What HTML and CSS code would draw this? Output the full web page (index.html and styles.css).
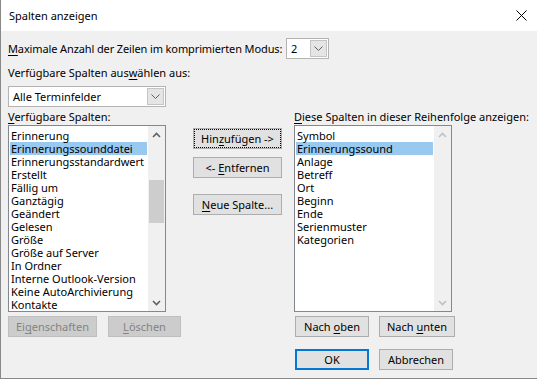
FILE: index.html
```html
<!DOCTYPE html>
<html lang="de">
<head>
    <meta charset="UTF-8">
    <title>Spalten anzeigen</title>
    <link rel="stylesheet" href="styles.css">
</head>
<body>
    <div class="dialog">
        <div class="titlebar">
            <span class="title">Spalten anzeigen</span>
            <svg class="close" width="11" height="11" viewBox="0 0 11 11"><path d="M0.5 0.5L10.5 10.5M10.5 0.5L0.5 10.5" stroke="#000" stroke-width="1"/></svg>
        </div>

        <div class="content">
            <div class="maxrow">
                <label class="maxlabel"><u>M</u>aximale Anzahl der Zeilen im komprimierten Modus:</label>
                <div class="combo combo-small">
                    <span class="combo-text">2</span>
                    <span class="combo-btn"><svg width="9" height="5" viewBox="0 0 9 5"><path d="M0.5 0.5L4.5 4.5L8.5 0.5" fill="none" stroke="#606060"/></svg></span>
                </div>
            </div>

            <div class="label">Verfügbare Spalten aus<u>w</u>ählen aus:</div>
            <div class="combo combo-wide">
                <span class="combo-text">Alle Terminfelder</span>
                <span class="combo-btn"><svg width="9" height="5" viewBox="0 0 9 5"><path d="M0.5 0.5L4.5 4.5L8.5 0.5" fill="none" stroke="#606060"/></svg></span>
            </div>

            <div class="columns">
                <!-- left: available columns -->
                <div class="col">
                    <div class="label"><u>V</u>erfügbare Spalten:</div>
                    <div class="listbox">
                        <ul class="items">
                            <li>Erinnerung</li>
                            <li class="selected">Erinnerungssounddatei</li>
                            <li>Erinnerungsstandardwert</li>
                            <li>Erstellt</li>
                            <li>Fällig um</li>
                            <li>Ganztägig</li>
                            <li>Geändert</li>
                            <li>Gelesen</li>
                            <li>Größe</li>
                            <li>Größe auf Server</li>
                            <li>In Ordner</li>
                            <li>Interne Outlook-Version</li>
                            <li>Keine AutoArchivierung</li>
                            <li>Kontakte</li>
                        </ul>
                        <div class="scrollbar">
                            <div class="sb-btn"><svg width="9" height="6" viewBox="0 0 9 6"><path d="M1 5L4.5 1.5L8 5" fill="none" stroke="#606060" stroke-width="1.6"/></svg></div>
                            <div class="sb-track"><div class="sb-thumb"></div></div>
                            <div class="sb-btn"><svg width="9" height="6" viewBox="0 0 9 6"><path d="M1 1L4.5 4.5L8 1" fill="none" stroke="#606060" stroke-width="1.6"/></svg></div>
                        </div>
                    </div>
                    <div class="btnrow">
                        <button class="btn btn-props" disabled>Ei<u>g</u>enschaften</button>
                        <button class="btn btn-del" disabled><u>L</u>öschen</button>
                    </div>
                </div>

                <!-- middle: move buttons -->
                <div class="mid">
                    <button class="btn btn-mid btn-focus">Hin<u>z</u>ufügen -&gt;</button>
                    <button class="btn btn-mid btn-remove">&lt;- <u>E</u>ntfernen</button>
                    <button class="btn btn-mid btn-new"><u>N</u>eue Spalte...</button>
                </div>

                <!-- right: shown columns -->
                <div class="col col-right">
                    <div class="label"><u>D</u>iese Spalten in dieser Reihenfolge anzeigen:</div>
                    <div class="listbox">
                        <ul class="items">
                            <li>Symbol</li>
                            <li class="selected">Erinnerungssound</li>
                            <li>Anlage</li>
                            <li>Betreff</li>
                            <li>Ort</li>
                            <li>Beginn</li>
                            <li>Ende</li>
                            <li>Serienmuster</li>
                            <li>Kategorien</li>
                        </ul>
                        <div class="scrollbar disabled">
                            <div class="sb-btn"><svg width="9" height="6" viewBox="0 0 9 6"><path d="M1 5L4.5 1.5L8 5" fill="none" stroke="#c0c0c0" stroke-width="1.6"/></svg></div>
                            <div class="sb-track"></div>
                            <div class="sb-btn"><svg width="9" height="6" viewBox="0 0 9 6"><path d="M1 1L4.5 4.5L8 1" fill="none" stroke="#c0c0c0" stroke-width="1.6"/></svg></div>
                        </div>
                    </div>
                    <div class="btnrow">
                        <button class="btn btn-up">Nach <u>o</u>ben</button>
                        <button class="btn btn-down">Nach <u>u</u>nten</button>
                    </div>
                    <div class="btnrow okrow">
                        <button class="btn btn-ok">OK</button>
                        <button class="btn btn-cancel">Abbrechen</button>
                    </div>
                </div>
            </div>
        </div>
    </div>
</body>
</html>
```

FILE: styles.css
```css
* {
    box-sizing: border-box;
}

html, body {
    margin: 0;
    padding: 0;
}

body {
    width: 537px;
    height: 379px;
    overflow: hidden;
    background: #f0f0f0;
    font-family: "Noto Sans", sans-serif;
    font-size: 11px;
    color: #000;
}

u {
    text-decoration-thickness: 1px;
    text-underline-offset: 2px;
}

.dialog {
    width: 537px;
    height: 379px;
    border-left: 1px solid #888;
    border-bottom: 1px solid #888;
    display: flex;
    flex-direction: column;
}

/* title bar */
.titlebar {
    height: 31px;
    background: #fff;
    display: flex;
    align-items: center;
    justify-content: space-between;
    padding: 0 10px 0 8px;
    flex: none;
}

.title {
    font-size: 11px;
}

.close {
    display: block;
}

.content {
    padding: 0 0 0 7px;
    display: flex;
    flex-direction: column;
}

.label {
    line-height: 14px;
    height: 14px;
    white-space: nowrap;
}

/* first row */
.maxrow {
    display: flex;
    align-items: center;
    height: 21px;
    margin-top: 7px;
}

.maxlabel {
    width: 278px;
    flex: none;
    white-space: nowrap;
    letter-spacing: -0.12px;
}

.content > .label {
    margin-top: 7px;
}

/* combo boxes */
.combo {
    height: 21px;
    background: #fff;
    border: 1px solid #b4b4b4;
    display: flex;
    align-items: center;
    padding: 1px;
    flex: none;
}

.combo-text {
    flex: 1;
    padding-left: 3px;
    white-space: nowrap;
}

.combo-btn {
    width: 17px;
    height: 17px;
    background: #e5e5e5;
    border: 1px solid #c4c4c4;
    display: flex;
    align-items: center;
    justify-content: center;
}

.combo-small {
    width: 43px;
}

.combo-wide {
    width: 158px;
    margin-top: 6px;
}

/* columns */
.columns {
    display: flex;
    margin-top: 3px;
}

.col {
    width: 158px;
    flex: none;
    display: flex;
    flex-direction: column;
}

.col .label {
    margin-bottom: 1px;
}

.listbox {
    height: 187px;
    background: #fff;
    border: 1px solid #828790;
    display: flex;
    overflow: hidden;
}

.items {
    flex: 1;
    list-style: none;
    margin: 0;
    padding: 3px 1px 0 1px;
    overflow: hidden;
}

.items li {
    height: 13px;
    line-height: 13px;
    padding-left: 1px;
    white-space: nowrap;
}

.items li.selected {
    background: #99c9ef;
}

.scrollbar {
    width: 17px;
    flex: none;
    background: #f0f0f0;
    display: flex;
    flex-direction: column;
}

.sb-btn {
    height: 17px;
    display: flex;
    align-items: center;
    justify-content: center;
}

.sb-track {
    flex: 1;
}

.sb-thumb {
    margin: 37px 1px 0 1px;
    height: 43px;
    background: #cdcdcd;
}

/* buttons */
.btn {
    font-family: "Noto Sans", sans-serif;
    font-size: 11px;
    height: 21px;
    padding: 0;
    flex: none;
    background: #e1e1e1;
    border: 1px solid #adadad;
    color: #000;
    line-height: 17px;
    white-space: nowrap;
}

.btn:disabled {
    background: #cccccc;
    border-color: #bfbfbf;
    color: #838383;
}

.btnrow {
    display: flex;
    margin-top: 4px;
}

.okrow {
    margin-top: 12px;
}

.btn-props {
    width: 89px;
}

.btn-del {
    width: 73px;
    margin-left: 11px;
}

.mid {
    width: 89px;
    flex: none;
    margin-left: 27px;
    padding-top: 18px;
    display: flex;
    flex-direction: column;
}

.btn-mid {
    width: 89px;
}

.btn-focus {
    outline: 1px dotted #000;
    outline-offset: -2px;
}

.btn-remove {
    margin-top: 8px;
}

.btn-new {
    margin-top: 16px;
}

.col-right {
    margin-left: 12px;
}

.btn-up {
    width: 74px;
    margin-left: 1px;
}

.btn-down {
    width: 76px;
    margin-left: 10px;
}

.btn-ok {
    width: 74px;
    margin-left: 1px;
    border: 2px solid #0078d7;
}

.btn-cancel {
    width: 74px;
    margin-left: 10px;
}
```
